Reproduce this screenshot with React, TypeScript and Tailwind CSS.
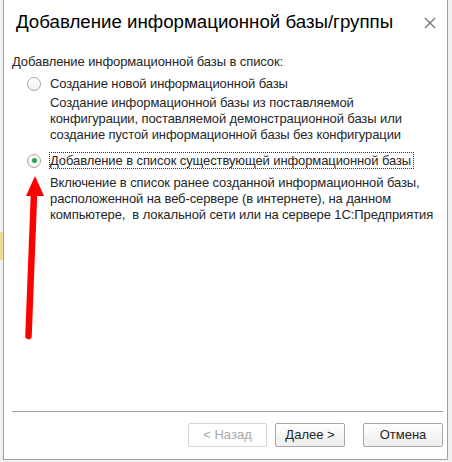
export default function App() {
  return (
    <div className="relative flex h-[462px] w-[452px] overflow-hidden bg-[#f0f0f0] font-['Liberation_Sans',Arial,sans-serif]">
      {/* left edge of window behind */}
      <div className="flex w-[3px] flex-col">
        <div className="h-[232px]" />
        <div className="h-[28px] bg-[#f0da94]" />
      </div>

      {/* Dialog */}
      <div className="flex h-[460px] w-[445px] flex-col border border-t-0 border-[#a0a0a0] bg-white">
        {/* Title */}
        <div className="flex h-[54px] items-start justify-between pl-[12px] pr-[11px] pt-[10px]">
          <h1 className="text-[18.7px] leading-[24px] text-black">Добавление информационной базы/группы</h1>
          <svg width="12" height="12" viewBox="0 0 12 12" className="mt-[7px]" fill="none" stroke="#707070" strokeWidth="1.2">
            <path d="M1 1l10 10M11 1L1 11" />
          </svg>
        </div>

        {/* Body */}
        <div className="px-[8px] text-[13px] leading-[16px] tracking-[-0.1px] text-[#262626]">
          <p>Добавление информационной базы в список:</p>

          <div className="mt-[5px] flex items-center pl-[15px]">
            <span className="h-[14px] w-[14px] rounded-full border border-[#a6a6a6] bg-gradient-to-b from-white to-[#f2f2f2]" />
            <span className="ml-[8px] border border-transparent leading-[15px]">Создание новой информационной базы</span>
          </div>
          <p className="mt-[3px] pl-[38px]">
            Создание информационной базы из поставляемой
            <br />
            конфигурации, поставляемой демонстрационной базы или
            <br />
            создание пустой информационной базы без конфигурации
          </p>

          <div className="mt-[9px] flex items-center pl-[15px]">
            <span className="flex h-[14px] w-[14px] items-center justify-center rounded-full border border-[#a6a6a6] bg-gradient-to-b from-white to-[#f2f2f2]">
              <span className="h-[5px] w-[5px] rounded-full bg-[#2f9e4f]" />
            </span>
            <span className="ml-[8px] border border-dotted border-[#333] pr-[2px] leading-[15px]">
              Добавление в список существующей информационной базы
            </span>
          </div>
          <p className="mt-[6px] pl-[38px]">
            Включение в список ранее созданной информационной базы,
            <br />
            расположенной на веб-сервере (в интернете), на данном
            <br />
            компьютере,&nbsp; в локальной сети или на сервере 1С:Предприятия
          </p>
        </div>

        {/* Footer */}
        <div className="ml-[8px] mr-[4px] mt-auto h-px bg-[#a0a0a0]" />
        <div className="mb-[12px] mr-[4px] mt-[11px] flex h-[24px] justify-end text-[13px] text-[#262626]">
          <button className="h-[24px] w-[79px] rounded-[2px] border border-[#d6d6d6] bg-white text-[#a8a8a8]">
            &lt; Назад
          </button>
          <button className="ml-[8px] h-[24px] w-[70px] rounded-[2px] border border-[#a8a8a8] bg-gradient-to-b from-white to-[#ededed]">
            Далее &gt;
          </button>
          <button className="ml-[18px] h-[24px] w-[80px] rounded-[2px] border border-[#a8a8a8] bg-gradient-to-b from-white to-[#ededed]">
            Отмена
          </button>
        </div>
      </div>

      {/* Red annotation arrow */}
      <svg className="pointer-events-none absolute left-0 top-0" width="452" height="462" viewBox="0 0 452 462">
        <path d="M28.5 336 L34 194" stroke="#ff0000" strokeWidth="6.5" strokeLinecap="round" fill="none" />
        <polygon points="35,176 26,196 44,196" fill="#ff0000" />
      </svg>
    </div>
  );
}
